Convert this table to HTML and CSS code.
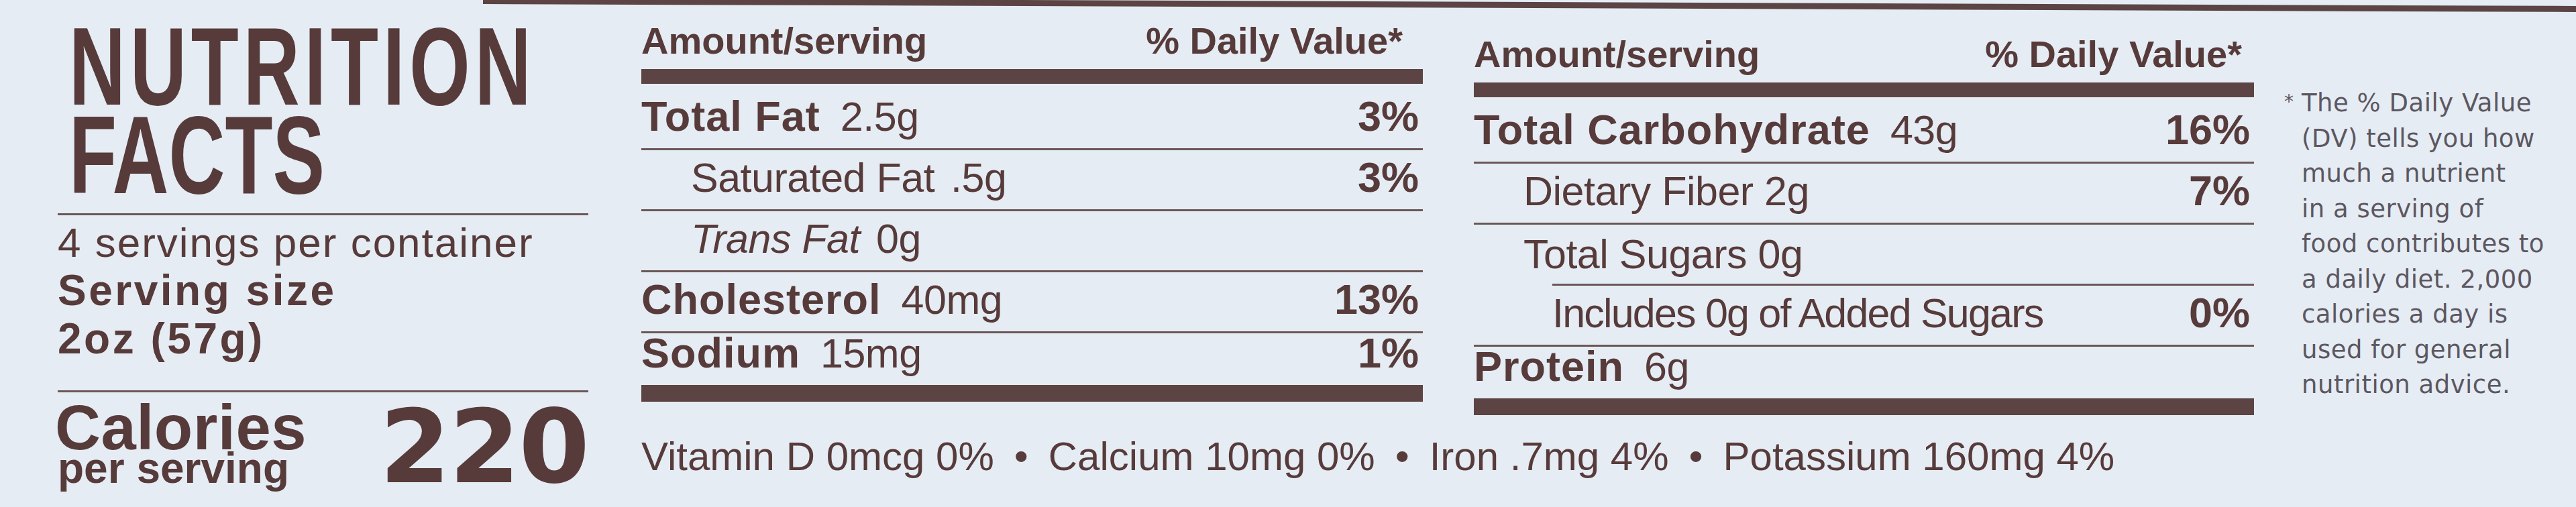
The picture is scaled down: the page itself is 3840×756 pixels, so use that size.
FILE: index.html
```html
<!DOCTYPE html>
<html lang="en">
<head>
    <meta charset="UTF-8">
    <meta name="viewport" content="width=device-width, initial-scale=1.0">
    <title>Nutrition Facts</title>
    <link rel="stylesheet" href="styles.css">
</head>
<body>
    <div class="edge"></div>

    <main class="label">
        <!-- Заголовок, порции, калории -->
        <section class="intro">
            <h1 class="title"><span class="word-1">NUTRITION</span><br><span class="word-2">FACTS</span></h1>

            <div class="servings">
                <p class="per-container">4 servings per container</p>
                <p class="serving-size">Serving size<br>2oz (57g)</p>
            </div>

            <div class="calories">
                <p class="cal-label">Calories<span>per serving</span></p>
                <p class="cal-value">220</p>
            </div>
        </section>

        <!-- Таблицы нутриентов -->
        <section class="facts">
            <div class="tables">
                <div class="table">
                    <div class="head"><span>Amount/serving</span><span>% Daily Value*</span></div>
                    <div class="row first"><span><b>Total Fat</b>2.5g</span><strong>3%</strong></div>
                    <div class="row sub"><span>Saturated Fat<i class="gap"></i>.5g</span><strong>3%</strong></div>
                    <div class="row sub"><span><em>Trans Fat</em><i class="gap"></i>0g</span></div>
                    <div class="row"><span><b>Cholesterol</b>40mg</span><strong>13%</strong></div>
                    <div class="row last"><span><b>Sodium</b>15mg</span><strong>1%</strong></div>
                </div>

                <div class="table shifted">
                    <div class="head"><span>Amount/serving</span><span>% Daily Value*</span></div>
                    <div class="row first"><span><b>Total Carbohydrate</b>43g</span><strong>16%</strong></div>
                    <div class="row sub"><span>Dietary Fiber 2g</span><strong>7%</strong></div>
                    <div class="row sub sub-line"><span>Total Sugars 0g</span></div>
                    <div class="row subsub"><span>Includes 0g of Added Sugars</span><strong>0%</strong></div>
                    <div class="row last"><span><b>Protein</b>6g</span></div>
                </div>
            </div>

            <p class="vitamins">
                Vitamin D 0mcg 0%<span class="sep">•</span>Calcium 10mg 0%<span class="sep">•</span>Iron .7mg 4%<span class="sep">•</span>Potassium 160mg 4%
            </p>
        </section>

        <!-- Сноска -->
        <aside class="note">
            <p><span class="star">*</span>The % Daily Value<br>(DV) tells you how<br>much a nutrient<br>in a serving of<br>food contributes to<br>a daily diet. 2,000<br>calories a day is<br>used for general<br>nutrition advice.</p>
        </aside>
    </main>
</body>
</html>
```

FILE: styles.css
```css
/* Базовые стили */
:root {
    --ink: #573b3a;
    --bar: #5d4444;
    --line: #6b5656;
    --paper: #e5ecf4;
    --note: #5c5760;
}

* {
    margin: 0;
    padding: 0;
    box-sizing: border-box;
}

body {
    width: 3840px;
    height: 756px;
    overflow: hidden;
    background: var(--paper);
    color: var(--ink);
    font-family: 'Liberation Sans', Arial, sans-serif;
    position: relative;
}

/* Край упаковки сверху */
.edge {
    position: absolute;
    top: -3px;
    left: 720px;
    width: 3200px;
    height: 9px;
    background: var(--bar);
    transform: rotate(0.22deg);
    transform-origin: left top;
}

.label {
    display: flex;
    align-items: flex-start;
    padding-left: 86px;
}

/* Левая колонка */
.intro {
    width: 791px;
    flex-shrink: 0;
}

.title {
    padding-top: 33px;
    height: 297px;
    font-size: 166px;
    line-height: 132px;
    font-weight: 700;
    white-space: nowrap;
    transform: scaleX(0.7);
    transform-origin: left top;
    margin-left: 17px;
}

.title .word-1 {
    letter-spacing: 10px;
}

.servings {
    margin-top: 21px;
    border-top: 3px solid var(--line);
    padding-top: 11px;
}

.per-container {
    font-size: 62px;
    line-height: 60px;
    letter-spacing: 2px;
}

.serving-size {
    margin-top: 5px;
    font-size: 64px;
    line-height: 72px;
    font-weight: 700;
    letter-spacing: 3.5px;
}

.calories {
    margin-top: 41px;
    border-top: 3px solid var(--line);
    display: flex;
    justify-content: space-between;
    align-items: flex-start;
}

.cal-label {
    margin-top: 13px;
    margin-left: -4px;
    font-size: 94px;
    line-height: 80px;
    font-weight: 700;
    letter-spacing: 0.5px;
}

.cal-label span {
    display: block;
    margin-left: 4px;
    font-size: 64px;
    line-height: 40px;
    letter-spacing: 0;
}

.cal-value {
    margin-top: 6px;
    font-family: 'DejaVu Sans', sans-serif;
    font-size: 152px;
    line-height: 1;
    font-weight: 700;
    letter-spacing: -2px;
}

/* Таблицы */
.facts {
    margin-left: 79px;
    width: 2405px;
    flex-shrink: 0;
}

.tables {
    display: flex;
    align-items: flex-start;
    gap: 76px;
}

.table {
    width: 1165px;
}

.table.shifted {
    width: 1163px;
    padding-top: 20px;
}

.head {
    display: flex;
    justify-content: space-between;
    align-items: flex-end;
    height: 125px;
    padding: 0 30px 14px 0;
    border-bottom: 22px solid var(--bar);
    font-size: 56px;
    line-height: 1;
    font-weight: 700;
}

.shifted .head {
    padding-right: 18px;
}

.row {
    display: flex;
    justify-content: space-between;
    align-items: flex-end;
    height: 91px;
    padding: 0 6px 16px 0;
    border-bottom: 3px solid var(--line);
    font-size: 61px;
    line-height: 1;
    letter-spacing: -0.5px;
}

.row.first {
    height: 99px;
}

.row.last {
    height: 102px;
    border-bottom: 25px solid var(--bar);
}

.row b {
    font-size: 63px;
    font-weight: 700;
    letter-spacing: 1px;
    margin-right: 30px;
}

.row strong {
    font-size: 63px;
    font-weight: 700;
    letter-spacing: 0;
}

.row.sub > span {
    padding-left: 74px;
}

.row.subsub > span {
    padding-left: 117px;
    letter-spacing: -1.8px;
}

/* Линия под Total Sugars начинается с отступом */
.row.sub-line {
    border-bottom: none;
    background: linear-gradient(var(--line), var(--line)) 117px 100% / calc(100% - 117px) 3px no-repeat;
}

.gap {
    display: inline-block;
    width: 24px;
}

.vitamins {
    margin-top: 32px;
    font-size: 60px;
    line-height: 1;
    white-space: nowrap;
}

.sep {
    margin: 0 30px;
}

/* Сноска */
.note {
    margin-left: 44px;
    padding-top: 126px;
    color: var(--note);
    font-family: 'DejaVu Sans', sans-serif;
    font-size: 37px;
    line-height: 52.5px;
    letter-spacing: 0.5px;
    white-space: nowrap;
}

.note p {
    padding-left: 26px;
    text-indent: -26px;
}

.star {
    display: inline-block;
    width: 26px;
    text-indent: 0;
    font-size: 28px;
    letter-spacing: 0;
    vertical-align: 5px;
}
```
